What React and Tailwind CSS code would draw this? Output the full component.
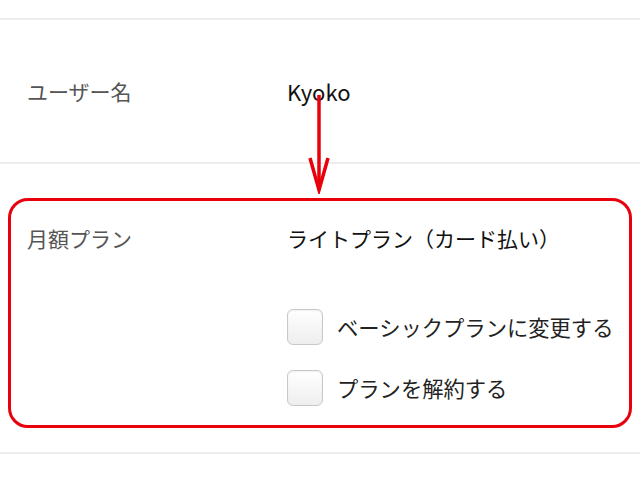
export default function App() {
  const font = { fontFamily: '"Noto Sans CJK JP", "Noto Sans", sans-serif' };
  return (
    <div className="relative w-[640px] h-[480px] overflow-hidden bg-white" style={font}>
      <div className="h-[18px]" />
      <div className="h-[2px] bg-[#ededed]" />
      <div className="h-[142px] flex items-center pl-[27px]">
        <div className="w-[260px] text-[21px] text-[#555555] leading-[30px]">ユーザー名</div>
        <div className="text-[22px] text-[#111111] leading-[30px]">Kyoko</div>
      </div>
      <div className="h-[2px] bg-[#ededed]" />
      <div className="px-[8px] pt-[34px]">
        <div className="h-[230px] border-[3px] border-[#e8000b] rounded-[20px] flex pl-[16px] pt-[22px]">
          <div className="w-[260px] text-[21px] text-[#555555] leading-[30px]">月額プラン</div>
          <div className="flex flex-col">
            <div className="text-[21px] text-[#111111] leading-[30px]">ライトプラン（カード払い）</div>
            <div className="mt-[56px] flex flex-col gap-[25px]">
              <label className="flex items-center gap-[14px]">
                <span className="w-[36px] h-[36px] rounded-[6px] border border-[#c8c8c8] bg-gradient-to-b from-[#ffffff] to-[#eeeeee] shadow-[inset_0_1px_2px_rgba(0,0,0,0.06)]" />
                <span className="text-[21.3px] text-[#222222] leading-[30px]">ベーシックプランに変更する</span>
              </label>
              <label className="flex items-center gap-[14px]">
                <span className="w-[36px] h-[36px] rounded-[6px] border border-[#c8c8c8] bg-gradient-to-b from-[#ffffff] to-[#eeeeee] shadow-[inset_0_1px_2px_rgba(0,0,0,0.06)]" />
                <span className="text-[21.3px] text-[#222222] leading-[30px]">プランを解約する</span>
              </label>
            </div>
          </div>
        </div>
      </div>
      <div className="h-[24px]" />
      <div className="h-[2px] bg-[#ededed]" />
      <svg className="absolute left-[307px] top-[95px]" width="24" height="99" viewBox="0 0 24 99">
        <line x1="12" y1="0" x2="12" y2="94" stroke="#e8000b" strokeWidth="3.5" />
        <polyline points="3,63 12,95 21,63" fill="none" stroke="#e8000b" strokeWidth="3.5" strokeLinejoin="miter" />
      </svg>
    </div>
  );
}
